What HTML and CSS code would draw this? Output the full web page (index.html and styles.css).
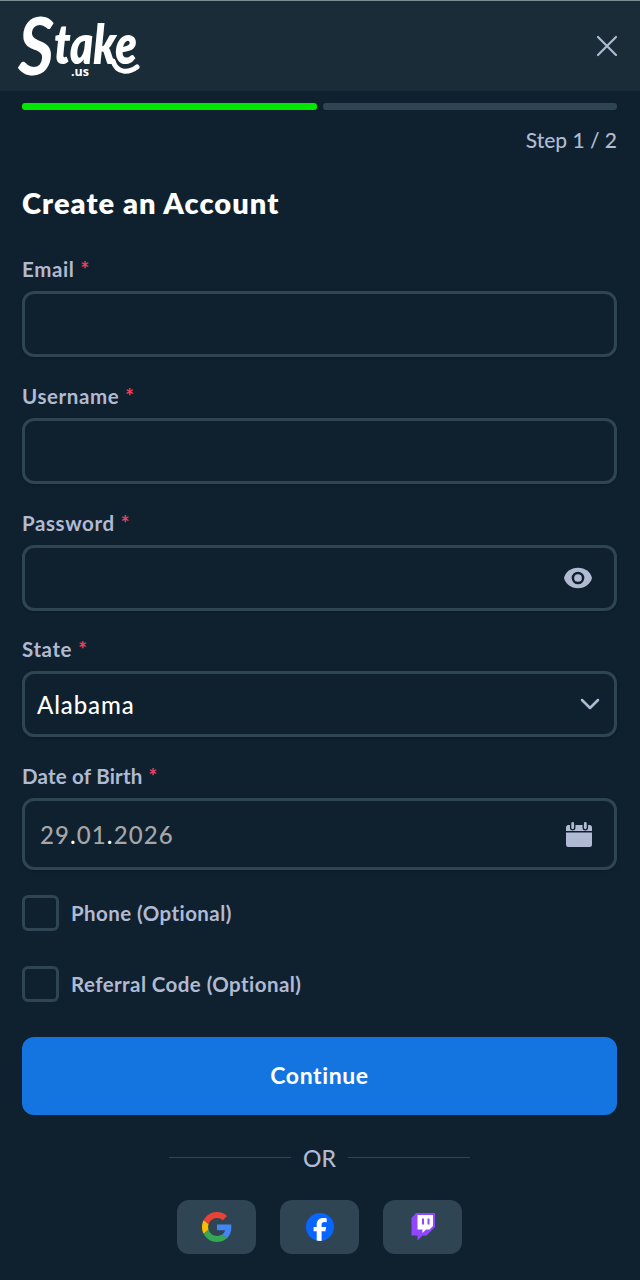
FILE: index.html
```html
<!DOCTYPE html>
<html lang="en">
<head>
    <meta charset="UTF-8">
    <meta name="viewport" content="width=device-width, initial-scale=1.0">
    <title>Create an Account</title>
    <link rel="stylesheet" href="styles.css">
</head>
<body>
    <header class="header">
        <svg class="logo" width="126" height="66" viewBox="0 0 126 66" role="img" aria-label="Stake.us">
            <text class="logo-big" x="2" y="62" textLength="36" lengthAdjust="spacingAndGlyphs">S</text>
            <text class="logo-word" x="38" y="51" textLength="83" lengthAdjust="spacingAndGlyphs">take</text>
            <path d="M97 48C101 61 113 60 121 54" fill="none" stroke="#fff" stroke-width="5" stroke-linecap="round"/>
            <text class="logo-us" x="55" y="63" textLength="18" lengthAdjust="spacingAndGlyphs">.us</text>
        </svg>
        <button class="close" aria-label="Close">
            <svg width="22" height="22" viewBox="0 0 22 22">
                <path d="M2 2L20 20M20 2L2 20" fill="none" stroke="#b1bad3" stroke-width="2.2" stroke-linecap="round"/>
            </svg>
        </button>
    </header>
    <main class="container">
        <div class="progress">
            <div class="bar active"></div>
            <div class="bar"></div>
        </div>
        <p class="step">Step 1 / 2</p>
        <h1>Create an Account</h1>

        <form class="form">
            <div class="field">
                <label for="email">Email<span class="required">*</span></label>
                <div class="box"><input type="text" id="email"></div>
            </div>
            <div class="field">
                <label for="username">Username<span class="required">*</span></label>
                <div class="box"><input type="text" id="username"></div>
            </div>
            <div class="field">
                <label for="password">Password<span class="required">*</span></label>
                <div class="box">
                    <input type="password" id="password">
                    <svg class="eye" width="28" height="22" viewBox="0 0 28 22">
                        <path d="M14 .8C6.800 .8 1.500 5 0 11C1.500 17 6.800 21.200 14 21.200S26.500 17 28 11C26.500 5 21.200 .8 14 .8Z" fill="#b1bad3"/>
                        <circle cx="14" cy="11" r="5.1" fill="#b1bad3" stroke="#0f212e" stroke-width="2.5"/>
                    </svg>
                </div>
            </div>
            <div class="field">
                <label>State<span class="required">*</span></label>
                <div class="box">
                    <span class="value">Alabama</span>
                    <svg class="chevron" width="20" height="12" viewBox="0 0 20 12">
                        <path d="M2 2L10 10L18 2" fill="none" stroke="#b1bad3" stroke-width="2.5" stroke-linecap="round" stroke-linejoin="round"/>
                    </svg>
                </div>
            </div>
            <div class="field birth">
                <label>Date of Birth<span class="required">*</span></label>
                <div class="box date">
                    <span class="value">29<b>.</b>01<b>.</b>2026</span>
                    <svg class="calendar" width="26" height="25" viewBox="0 0 26 25">
                        <path d="M2.500 3H23.500Q26 3 26 5.500V9H0V5.500Q0 3 2.500 3ZM0 10.500H26V22.500Q26 25 23.500 25H2.500Q0 25 0 22.500Z" fill="#b1bad3"/>
                        <path d="M6.700 2V5.800M19.300 2V5.800" stroke="#0f212e" stroke-width="5.500" stroke-linecap="round"/>
                        <path d="M6.700 1.500V5.800M19.300 1.500V5.800" stroke="#b1bad3" stroke-width="2.800" stroke-linecap="round"/>
                    </svg>
                </div>
            </div>

            <label class="check"><input type="checkbox">Phone (Optional)</label>
            <label class="check"><input type="checkbox">Referral Code (Optional)</label>

            <button type="button" class="continue">Continue</button>
        </form>

        <div class="or">OR</div>

        <div class="socials">
            <button aria-label="Google">
                <svg width="30" height="30" viewBox="0 0 48 48">
                    <path fill="#ea4335" d="M24 9.500c3.540 0 6.710 1.220 9.210 3.600l6.850-6.850C35.900 2.380 30.470 0 24 0 14.620 0 6.510 5.380 2.560 13.220l7.980 6.190C12.430 13.720 17.740 9.500 24 9.500z"/>
                    <path fill="#4285f4" d="M46.980 24.550c0-1.570-.15-3.090-.38-4.550H24v9.020h12.940c-.58 2.960-2.260 5.480-4.780 7.180l7.730 6c4.510-4.180 7.090-10.360 7.090-17.650z"/>
                    <path fill="#fbbc05" d="M10.530 28.590c-.48-1.450-.76-2.990-.76-4.590s.27-3.140.76-4.590l-7.980-6.190C.92 16.460 0 20.120 0 24c0 3.880.92 7.540 2.560 10.780l7.970-6.190z"/>
                    <path fill="#34a853" d="M24 48c6.480 0 11.930-2.130 15.890-5.810l-7.730-6c-2.150 1.450-4.920 2.300-8.160 2.300-6.260 0-11.570-4.220-13.470-9.910l-7.980 6.190C6.510 42.620 14.620 48 24 48z"/>
                </svg>
            </button>
            <button aria-label="Facebook">
                <svg width="28" height="28" viewBox="0 0 28 28">
                    <circle cx="14" cy="14" r="14" fill="#0866ff"/>
                    <path d="M10.700 27.600V18.300H7.600V13.900H10.700V12C10.700 7.200 13 5 17.400 5C18.500 5 20 5.200 20.700 5.400V9.200L18.500 9.100C16.400 9.100 15.600 9.900 15.600 12V13.900H20.200L19.400 18.300H15.600V27.900Q13 28.200 10.700 27.600Z" fill="#fff"/>
                </svg>
            </button>
            <button aria-label="Twitch">
                <svg width="24" height="28" viewBox="0 0 24 28">
                    <path d="M5 0H24V14L15.500 22.500H11.500L6.500 27.500V22.500H.5V5Z" fill="#9146ff"/>
                    <path d="M6.500 2H22V13L18.500 16.500H15L11.500 20V16.500H6.500Z" fill="#fff"/>
                    <path d="M11 5.500H13V11.500H11ZM16.500 5.500H18.500V11.500H16.500Z" fill="#9146ff"/>
                </svg>
            </button>
        </div>
    </main>
</body>
</html>
```
FILE: styles.css
```css
* {
    box-sizing: border-box;
}

body {
    margin: 0;
    min-height: 1280px;
    background: #0f212e;
    color: #b1bad3;
    font-family: Lato, "Liberation Sans", sans-serif;
    font-size: 21px;
    font-variant-ligatures: none;
}

button {
    border: none;
    padding: 0;
    font-family: inherit;
    cursor: pointer;
}

svg {
    display: block;
}

.header {
    display: flex;
    justify-content: space-between;
    align-items: center;
    height: 91px;
    padding: 0 22px 0 16px;
    background: #1a2c38;
    border-top: 1px solid #7b8b92;
}

.logo {
    overflow: visible;
    fill: #fff;
    font-family: Lato, sans-serif;
    font-style: italic;
    font-weight: 700;
}

.logo-big {
    font-size: 81px;
}

.logo-word {
    font-size: 54px;
    font-weight: 800;
}

.logo-us {
    font-family: "Open Sans", sans-serif;
    font-size: 13px;
    font-style: normal;
    font-weight: 700;
}

.close {
    background: none;
}

.container {
    padding: 12px 23px 0 22px;
}

.progress {
    display: flex;
    gap: 6px;
}

.bar {
    flex: 1;
    height: 7px;
    border-radius: 3px;
    background: #2f4553;
}

.bar.active {
    background: #00e701;
}

.step {
    margin: 17px 0 0;
    line-height: 26px;
    text-align: right;
    font-weight: 500;
}

h1 {
    margin: 32px 0 37px;
    color: #fff;
    font-size: 29px;
    font-weight: 800;
    letter-spacing: 1.05px;
    line-height: 36px;
}

.form {
    display: flex;
    flex-direction: column;
}

.field {
    display: flex;
    flex-direction: column;
    gap: 9px;
    margin-bottom: 27.8px;
}

.field label {
    display: flex;
    gap: 6px;
    height: 24px;
    line-height: 23px;
    font-size: 20.5px;
    font-weight: 700;
    letter-spacing: 0.6px;
}

.field.birth {
    margin-bottom: 25px;
}

.field.birth label {
    letter-spacing: 0.2px;
}

.required {
    color: #ed4163;
}

.box {
    display: flex;
    align-items: center;
    justify-content: space-between;
    height: 66px;
    padding: 0 14px 0 12px;
    border: 3px solid #2f4553;
    border-radius: 12px;
    box-shadow: 0 1px 3px rgba(0, 0, 0, 0.2);
}

.box input {
    flex: 1;
    min-width: 0;
    border: none;
    outline: none;
    background: none;
    color: #fff;
    font: inherit;
}

.value {
    color: #fff;
    font-size: 24px;
    font-weight: 500;
    letter-spacing: 0.9px;
}

.eye, .calendar {
    margin-right: 8px;
}

.date {
    height: 72px;
    padding-left: 15px;
}

.date .value {
    color: #a6a6a6;
    letter-spacing: 1.1px;
}

.date b {
    color: #fff;
    font-weight: 500;
}

.check {
    display: flex;
    align-items: center;
    gap: 12px;
    height: 36px;
    margin-bottom: 35px;
    font-size: 20.5px;
    font-weight: 700;
    letter-spacing: 0.43px;
}

.check input {
    appearance: none;
    width: 37px;
    height: 36px;
    margin: 0;
    border: 3px solid #2f4553;
    border-radius: 6px;
}

.continue {
    height: 78px;
    padding-bottom: 2px;
    border-radius: 12px;
    background: #1475e1;
    color: #fff;
    font-size: 23px;
    font-weight: 700;
    letter-spacing: 0.6px;
}

.or {
    display: flex;
    align-items: center;
    justify-content: center;
    gap: 12px;
    height: 30px;
    margin-top: 28px;
    font-size: 23px;
    font-weight: 500;
}

.or::before,
.or::after {
    content: "";
    width: 122px;
    height: 1px;
    margin-bottom: 2px;
    background: #2f4553;
}

.socials {
    display: flex;
    justify-content: center;
    gap: 24px;
    margin-top: 27px;
}

.socials button {
    display: flex;
    align-items: center;
    justify-content: center;
    width: 79px;
    height: 54px;
    border-radius: 12px;
    background: #2f4553;
}
```
